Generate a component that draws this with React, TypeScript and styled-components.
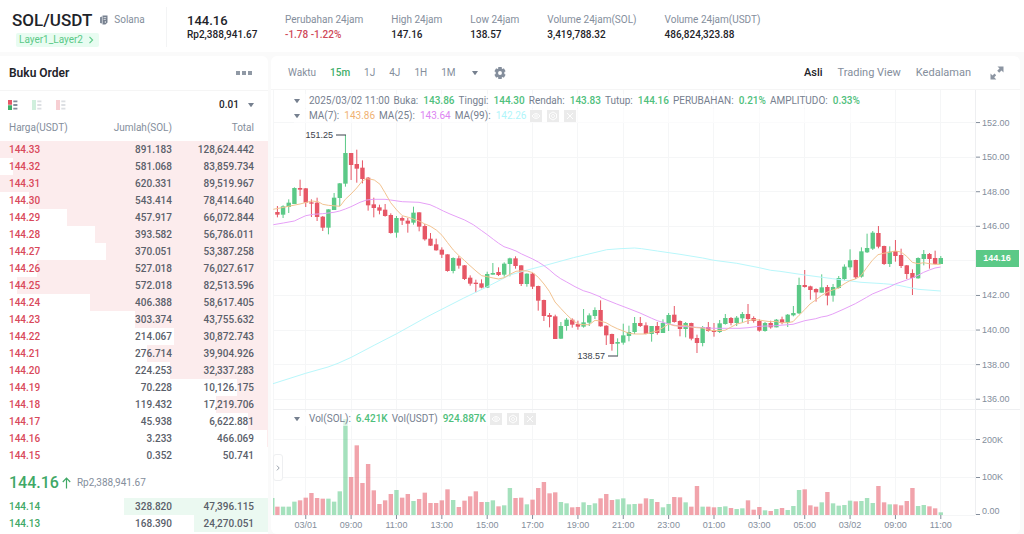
import React from "react";
import styled, { createGlobalStyle } from "styled-components";

const GREEN = "#5bc987";
const RED = "#e65766";

const Global = createGlobalStyle`
  * { box-sizing: border-box; }
  body {
    margin: 0;
    background: #fafafa;
    color: #1e2329;
    font-family: Roboto, "Liberation Sans", sans-serif;
    font-size: 10px;
    line-height: 16px;
  }
  button, select { font: inherit; color: inherit; background: none; border: 0; padding: 0; margin: 0; cursor: pointer; }
  h1, h2, dl, dt, dd, p { margin: 0; font-size: inherit; font-weight: inherit; }
  svg { display: block; }
`;

const Page = styled.div`
  display: flex;
  flex-direction: column;
  gap: 4px;
  height: 100vh;
  overflow: hidden;
`;

/* ---------- header ---------- */

const Header = styled.header`
  display: flex;
  align-items: center;
  flex-shrink: 0;
  height: 52px;
  padding-top: 2px;
  background: #fff;
`;

const PairBlock = styled.div`
  display: flex;
  flex-direction: column;
  gap: 1px;
  width: 167px;
  height: 40px;
  padding-left: 12px;
  border-right: 1px solid #f3f4f5;
`;

const PairLine = styled.div`
  display: flex;
  align-items: center;
  gap: 8px;
  height: 26px;
  color: #848e9c;
`;

const PairName = styled.h1`
  color: #1e2329;
  font-size: 17px;
  font-weight: 500;
`;

const ProjectLink = styled.a`
  display: flex;
  align-items: center;
  gap: 6px;
  color: #848e9c;
  text-decoration: none;
`;

const LayerTag = styled.a`
  display: flex;
  align-items: center;
  align-self: flex-start;
  gap: 4px;
  height: 14px;
  margin-left: 4px;
  padding: 0 4px 0 3px;
  border-radius: 2px;
  background: #e8fcf1;
  color: ${GREEN};
  text-decoration: none;
`;

const LastPrice = styled.div`
  width: 98px;
  margin-left: 20px;
  padding-top: 2px;
  line-height: 14px;
  font-weight: 500;
  strong { display: block; font-size: 13px; font-weight: 500; }
`;

const Stats = styled.dl`
  display: flex;
  gap: 28px;
`;

const Stat = styled.div<{ $down?: boolean }>`
  line-height: 15px;
  dt { color: #848e9c; }
  dd { font-weight: 500; color: ${(p) => (p.$down ? "#cf4a59" : "#1e2329")}; }
`;

/* ---------- columns ---------- */

const Columns = styled.main`
  display: flex;
  flex: 1;
  gap: 3px;
  min-height: 0;
  padding-right: 4px;
`;

const BookCard = styled.section`
  flex: 0 0 268px;
  overflow: hidden;
  border-radius: 0 6px 0 0;
  background: #fff;
`;

const BookTitle = styled.div`
  display: flex;
  align-items: center;
  justify-content: space-between;
  height: 35px;
  padding: 0 16px 0 9px;
  border-bottom: 1px solid #f5f5f5;
  h2 { font-size: 12px; font-weight: 600; }
`;

const BookTools = styled.div`
  display: flex;
  align-items: center;
  height: 28px;
  padding: 0 14px 0 8px;
`;

const ModeButton = styled.button<{ $dim?: boolean }>`
  margin-right: 14px;
  opacity: ${(p) => (p.$dim ? 0.28 : 1)};
`;

const StepLabel = styled.label`
  display: flex;
  align-items: center;
  gap: 9px;
  margin-left: auto;
  font-weight: 500;
  select { appearance: none; outline: none; }
`;

const BookTable = styled.table`
  width: 100%;
  border-collapse: collapse;
  table-layout: fixed;
  th, td { padding: 0; text-align: right; }
  th { height: 22px; padding-bottom: 5px; font-weight: 400; color: #848e9c; }
  th:first-child, td:first-child { width: 80px; padding-left: 9px; text-align: left; }
  th:nth-child(2), td:nth-child(2) { width: 92px; }
  th:last-child, td:last-child { padding-right: 14px; }
`;

const LevelRow = styled.tr<{ $side: "ask" | "bid" }>`
  height: 17px;
  font-weight: 500;
  color: #5a606a;
  background: linear-gradient(to left, ${(p) => (p.$side === "ask" ? "#fceced" : "#ebf9f1")} var(--depth), transparent var(--depth));
  td:first-child { color: ${(p) => (p.$side === "ask" ? "#d9485a" : "#3fa866")}; }
`;

const MidPrice = styled.div`
  display: flex;
  align-items: center;
  height: 34px;
  padding: 3px 9px 0 9px;
  color: #848e9c;
  strong { color: #3fa866; font-size: 16px; font-weight: 500; }
  svg { margin: 0 6px 0 3px; }
`;

/* ---------- chart ---------- */

const ChartCard = styled.section`
  flex: 1;
  min-width: 0;
  overflow: hidden;
  border-radius: 6px;
  background: #fff;
`;

const Toolbar = styled.div`
  display: flex;
  align-items: center;
  justify-content: space-between;
  height: 34px;
  padding: 0 16px 0 17px;
  border-bottom: 1px solid #f5f5f5;
`;

const ToolGroup = styled.div<{ $gap: number; $size: number }>`
  display: flex;
  align-items: center;
  gap: ${(p) => p.$gap}px;
  font-size: ${(p) => p.$size}px;
`;

const Tool = styled.button<{ $tone?: "green" | "dark" }>`
  font-weight: ${(p) => (p.$tone ? 500 : 400)};
  color: ${(p) => (p.$tone === "green" ? "#3fae69" : p.$tone === "dark" ? "#1e2329" : "#848e9c")};
`;

const IconTool = styled(Tool)`
  padding: 0 2px;
`;

const FullscreenTool = styled(Tool)`
  margin-left: 4px;
`;

const Plot = styled.div`
  position: relative;
  > svg { width: 100%; height: auto; }
`;

const Legend = styled.div<{ $top: string }>`
  position: absolute;
  top: ${(p) => p.$top};
  left: 23px;
  display: flex;
  flex-direction: column;
  gap: 1px;
  white-space: nowrap;
`;

const LegendLine = styled.div`
  display: flex;
  align-items: center;
  gap: 4px;
  height: 14px;
  color: #76808f;
  background: rgba(255, 255, 255, 0.6);
  > button:first-child { margin-right: 5px; }
`;

const Value = styled.span<{ $color?: string }>`
  margin-left: 1px;
  color: ${(p) => p.$color || "#4fc07c"};
  font-weight: ${(p) => (p.$color ? 400 : 500)};
`;

const MiniButton = styled.button`
  display: grid;
  place-items: center;
  width: 12px;
  height: 12px;
  margin-right: 1px;
  background: #ebebeb;
`;

const Handle = styled.button`
  position: absolute;
  left: 2px;
  top: 82%;
  display: grid;
  place-items: center;
  width: 10px;
  height: 27px;
  border: 1px solid #eeeff1;
  border-radius: 3px;
  background: #fff;
`;

/* ---------- icons ---------- */

const Caret = () => (
  <svg width="6" height="4" viewBox="0 0 6 4" aria-hidden="true">
    <path d="M0 0h6L3.6 3.6a.8.8 0 0 1-1.2 0z" fill="#76808f" />
  </svg>
);

const DocIcon = () => (
  <svg width="8" height="10" viewBox="0 0 8 10" aria-hidden="true">
    <path d="M0 2.2 2 1.4v7.2L0 8z" fill="#848e9c" />
    <path d="M2.5.6h5v7L5.4 9.4H2.5z" fill="#76808f" />
    <path d="M3.6 2.6h2.6M3.6 4.4h2.2M5.3 6v2" stroke="#fff" strokeWidth=".7" />
  </svg>
);

const ChevronRight = ({ color, size = 8 }: { color: string; size?: number }) => (
  <svg width={size} height={size} viewBox="0 0 8 8" aria-hidden="true">
    <path d="M2.5.8 5.6 4 2.5 7.2" fill="none" stroke={color} strokeWidth="1.1" />
  </svg>
);

const DotsIcon = () => (
  <svg width="16" height="4" viewBox="0 0 16 4" aria-hidden="true">
    <path d="M0 0h4v4H0zM6 0h4v4H6zM12 0h4v4h-4z" fill="#9099a5" />
  </svg>
);

const ModeIcon = ({ top, bottom }: { top: string; bottom: string }) => (
  <svg width="10" height="10" viewBox="0 0 10 10" aria-hidden="true">
    <path d="M0 0h4v4.7H0z" fill={top} />
    <path d="M0 5.3h4V10H0z" fill={bottom} />
    {top === bottom && <path d="M0 4h4v2H0z" fill={top} />}
    <path d="M5.3.4H9.400v1.800H5.3zM5.3 4.100H9.400v1.800H5.3zM5.3 7.800H9.400v1.800H5.3z" fill="#848e9c" />
  </svg>
);

const GearIcon = () => (
  <svg width="12" height="12" viewBox="0 0 13 13" aria-hidden="true">
    <path
      fill="#848e9c"
      fillRule="evenodd"
      d="M4.6 0h3.8v1.7l.9.5 1.4-.8 1.9 3.2-1.4.9v2l1.4.9-1.9 3.2-1.4-.8-.9.5V13H4.6v-1.7l-.9-.5-1.4.8L.4 8.400l1.400-.9v-2L.4 4.600l1.900-3.200 1.400.8.9-.5zM6.500 4.400a2.100 2.100 0 1 0 0 4.200 2.100 2.100 0 0 0 0-4.200z"
    />
  </svg>
);

const ExpandIcon = () => (
  <svg width="14" height="14" viewBox="0 0 14 14" aria-hidden="true">
    <path
      d="M7.500.5h6V6.500l-2-2L9.200 6.800 7.200 4.800 9.500 2.500zM.5 7.500l2 2L4.500 7.500l1.700 1.700-2 2.100 2.100 2.200H.5z"
      fill="#8c95a2"
    />
  </svg>
);

const UpArrow = () => (
  <svg width="9" height="12" viewBox="0 0 9 12" aria-hidden="true">
    <path d="M4.500 11.500V1.200M.8 5 4.500 1.200 8.200 5" fill="none" stroke="#3fa866" strokeWidth="1.200" />
  </svg>
);

const miniPaths = {
  Lihat: "M1 5q4-5 8 0q-4 5-8 0zM5 3.800a1.200 1.200 0 1 0 .01 0z",
  Atur: "M5 1l3.500 2v4L5 9 1.500 7V3zM5 3.500a1.500 1.500 0 1 0 .01 0z",
  Tutup: "M2 2l6 6M8 2l-6 6",
};

const MiniButtons = () => (
  <>
    {Object.entries(miniPaths).map(([label, d]) => (
      <MiniButton key={label} type="button" aria-label={label}>
        <svg width="10" height="10" viewBox="0 0 10 10" aria-hidden="true">
          <path d={d} fill="none" stroke="#fff" strokeWidth=".9" />
        </svg>
      </MiniButton>
    ))}
  </>
);

/* ---------- data ---------- */

const ASKS = [
  ["144.33", "891.183", "128,624.442"],
  ["144.32", "581.068", "83,859.734"],
  ["144.31", "620.331", "89,519.967"],
  ["144.30", "543.414", "78,414.640"],
  ["144.29", "457.917", "66,072.844"],
  ["144.28", "393.582", "56,786.011"],
  ["144.27", "370.051", "53,387.258"],
  ["144.26", "527.018", "76,027.617"],
  ["144.25", "572.018", "82,513.596"],
  ["144.24", "406.388", "58,617.405"],
  ["144.23", "303.374", "43,755.632"],
  ["144.22", "214.067", "30,872.743"],
  ["144.21", "276.714", "39,904.926"],
  ["144.20", "224.253", "32,337.283"],
  ["144.19", "70.228", "10,126.175"],
  ["144.18", "119.432", "17,219.706"],
  ["144.17", "45.938", "6,622.881"],
  ["144.16", "3.233", "466.069"],
  ["144.15", "0.352", "50.741"],
];

const BIDS = [
  ["144.14", "328.820", "47,396.115"],
  ["144.13", "168.390", "24,270.051"],
];

/* total that fills a row's depth bar */
const FULL_DEPTH = 88100;

/* one entry per 15m candle: direction, body top, body bottom, high, low, volume.
   Units are ticks of a third of a pixel. */
const CANDLES = `
r 276 284 258 292 25|g 259 284 256 294 25|g 248 261 238 279 25|g 204 252 202 252 40|r 204 209 179 228 44
r 205 248 204 261 52|r 247 251 238 291 66|r 248 291 233 303 51|r 290 323 288 333 49|g 268 323 268 343 49
g 233 270 219 270 40|g 190 234 189 258 71|g 99 191 45 200 288|r 99 135 99 180 114|r 132 146 89 188 209
r 143 177 121 190 96|r 173 256 171 272 153|r 253 264 233 292 74|r 262 272 254 283 33|r 269 288 252 290 44
r 285 339 280 341 63|g 294 338 288 353 75|r 294 302 289 315 52|r 302 311 294 338 63|g 278 308 260 314 42
r 277 320 277 334 48|r 318 358 312 362 67|r 356 377 339 378 36|r 373 391 356 392 36|r 389 404 382 414 44
r 403 453 403 455 77|g 414 453 412 460 45|r 415 437 408 446 24|r 436 477 435 480 43|r 473 491 466 497 56
r 488 492 479 517 71|r 490 503 478 505 39|g 462 503 455 503 39|g 459 464 429 464 44|r 456 465 442 468 26
g 431 464 427 470 29|g 415 432 413 469 81|r 415 438 409 446 51|r 436 492 436 498 52|g 461 492 460 500 32
r 461 500 458 507 46|r 498 542 497 572 81|r 540 588 539 603 99|r 585 591 579 622 65|r 589 657 584 657 68
g 618 656 606 657 39|g 599 618 594 632 35|r 599 614 595 623 23|r 612 620 602 629 24|g 607 620 567 623 38
g 586 608 580 618 30|g 570 588 562 597 35|r 570 619 541 620 50|r 617 646 616 675 63|r 642 672 641 692 45
g 666 671 655 707 47|g 646 668 611 674 50|g 636 648 617 664 32|g 609 636 591 642 33|r 609 618 591 621 34
r 616 642 607 643 50|g 618 642 618 665 48|r 618 639 606 644 39|g 609 639 598 639 23|g 585 611 579 633 33
r 584 606 558 608 54|r 603 627 601 649 53|g 609 627 606 652 38|r 609 656 608 661 25|r 654 669 644 699 87
g 621 669 618 679 25|r 621 633 606 635 25|r 631 636 609 650 23|g 610 636 600 639 24|g 594 612 582 614 26
r 594 609 591 616 21|g 593 609 588 618 18|g 582 595 576 608 20|r 582 597 552 612 44|r 594 603 589 608 16
r 603 632 598 635 24|g 609 633 606 635 14|r 609 622 602 626 12|g 599 622 597 622 18|r 598 609 590 613 21
g 584 608 582 621 15|g 579 586 558 589 27|g 495 580 473 582 75|r 495 501 450 503 77|r 499 510 497 539 29
r 507 517 505 545 25|g 502 518 463 518 38|r 501 527 495 556 69|g 501 527 492 545 35|g 474 504 468 506 28
g 440 477 433 481 30|g 421 442 388 450 43|r 420 472 419 477 41|g 394 470 382 473 42|g 384 397 341 399 51
g 338 386 333 390 36|r 339 380 318 385 87|r 378 432 377 435 38|g 395 432 379 441 32|r 393 408 360 425 32
r 405 438 386 444 29|r 436 462 435 477 42|r 459 474 448 525 81|g 414 475 412 476 27|g 402 417 390 436 30
r 402 417 399 446 26|r 414 432 392 433 20|g 414 432 408 432 8`
  .trim()
  .split(/[|\n]/)
  .map((entry) => {
    const [side, ...n] = entry.split(" ");
    const [top, bottom, high, low, volume] = n.map(Number);
    return { color: side === "g" ? GREEN : RED, top, bottom, high, low, volume };
  });

/* averages are kept in sections, each with its own origin in ticks */
type Section = [number, number, string];

const AVERAGES: { color: string; sections: Section[] }[] = [
  {
    color: "#b9f7fb",
    sections: [
      [-6, 510, "15,281 113,250 180,231 210,220 250,202 320,165 386,131 460,90"],
      [480, 300, "0,286 100,235 172,200 240,165 292,150 350,135 430,113 510,94"],
      [990, 300, "20,89 60,86 104,84 125,86 172,93 240,103 308,114 342,121 410,130 478,143 512,151"],
      [1530, 270, "0,184 74,195 158,206 243,217 311,221 346,224 380,231 414,238 482,243"],
    ],
  },
  {
    color: "#e6a0f7",
    sections: [
      [0, 0, "10,314 40,309 73,303 90,295 107,287 130,283 158,281 192,277 209,273 226,267 243,260 270,247 290,240 310,238 345,238 362,240 397,245 447,247 480,254 500,263 520,273 540,282"],
      [480, 300, "104,0 130,14 155,32 172,44 190,58 206,70 222,80 240,86 258,93 275,102 308,117 325,126 342,137 358,149 375,164 392,176 410,186 435,200 460,212 480,218 512,231"],
      [990, 300, "0,232 50,252 87,266 120,279 155,295 172,302 206,312 240,319 290,322 342,325 420,325 444,323 478,319 529,317"],
      [1530, 270, "0,346 39,343 74,332 107,326 124,321 141,318 158,312 192,297 226,281 260,262 277,252 294,245 311,238 328,231 346,222 363,216 397,204 414,196 431,187 448,180 465,174 482,171"],
    ],
  },
  {
    color: "#f2c391",
    sections: [
      [0, 0, "10,268 35,263 60,258 90,252 125,243 145,245 158,253 175,256 210,259 226,238 243,222 260,204 277,183 290,176 303,178 313,180 330,193 345,218 362,248 380,270 397,287 415,292 430,297 447,303 463,311"],
      [480, 300, "0,18 20,31 36,46 52,67 70,90 87,107 104,122 120,137 138,153 155,167 172,170 190,174 206,177 222,173 240,163 258,154 275,152 292,153 308,158 325,172 342,192 358,214 375,246 392,265 410,284 427,300 444,312 460,314 478,314 495,301"],
      [990, 300, "0,303 18,308 35,318 52,326 70,333 87,340 104,342 135,342 155,337 172,333 189,323 206,312 222,317 240,318 256,316 275,321 290,323 308,324 325,330 342,332 375,331 392,322 410,312 427,308 444,302 461,299 478,300 495,303 512,305 529,304"],
      [1530, 270, "0,338 22,338 39,335 57,316 74,299 90,282 107,270 124,257 141,247 158,240 175,234 192,222 209,212 226,207 243,197 260,173 277,151 294,134 311,130 328,127 346,123 363,126 380,139 397,157 414,161 431,158 448,161 465,163 482,163"],
    ],
  },
];

const TIMES = ["03/01", "09:00", "11:00", "13:00", "15:00", "17:00", "19:00", "21:00", "23:00", "01:00", "03:00", "05:00", "03/02", "09:00", "11:00"];
const PRICES = [152, 150, 148, 146, 144, 142, 140, 138, 136];

const candleX = (i: number) => 6.4 + i * 5.67;
const priceY = (price: number) => 136.3 + (146 - price) * 17.29;
const tickY = (t: number) => 30 + t / 3;
const VOLUME_BASE = 425;
const AXIS_X = 704;

const averagePoints = (sections: Section[]) =>
  sections
    .flatMap(([ox, oy, list]) =>
      list.split(" ").map((pair) => {
        const [x, y] = pair.split(",").map(Number);
        return `${((x + ox) / 3 - 1).toFixed(1)},${tickY(y + oy).toFixed(1)}`;
      })
    )
    .join(" ");

const Candles = () => (
  <svg viewBox="0 0 749 444" role="img" aria-label="Grafik SOL/USDT 15m" fontFamily='"Liberation Sans", Arial, sans-serif' fontSize="9" fill="#848e9c">
    <g stroke="#f5f6f7" strokeWidth="1" shapeRendering="crispEdges">
      {PRICES.map((p) => (
        <line key={p} x1="2" x2={AXIS_X} y1={priceY(p)} y2={priceY(p)} />
      ))}
      <line x1="2" x2={AXIS_X} y1="349.700" y2="349.700" />
      <line x1="2" x2={AXIS_X} y1="387.500" y2="387.500" />
      {TIMES.map((_, k) => (
        <line key={k} x1={candleX(5 + 8 * k)} x2={candleX(5 + 8 * k)} y1="0" y2={VOLUME_BASE} />
      ))}
      <line x1="2.500" x2="2.500" y1="0" y2={VOLUME_BASE} />
      <line x1="2" x2={AXIS_X} y1={VOLUME_BASE} y2={VOLUME_BASE} />
      <line x1="2" x2="749" y1="319.500" y2="319.500" stroke="#eeeff1" />
      <line x1={AXIS_X} x2={AXIS_X} y1="0" y2={VOLUME_BASE} stroke="#eeeff1" />
    </g>

    <rect x="2" y="408" width="1.500" height="17" fill={GREEN} opacity=".55" />
    {CANDLES.map((c, i) => (
      <g key={i} fill={c.color}>
        <rect x={candleX(i) - 2.2} y={VOLUME_BASE - c.volume / 3} width="4.400" height={c.volume / 3} opacity=".55" />
        <rect x={candleX(i) - 0.5} y={tickY(c.high)} width="1" height={(c.low - c.high) / 3} />
        <rect x={candleX(i) - 2.2} y={tickY(c.top)} width="4.400" height={(c.bottom - c.top) / 3} />
      </g>
    ))}

    {AVERAGES.map((a) => (
      <polyline key={a.color} points={averagePoints(a.sections)} fill="none" stroke={a.color} strokeWidth="1" strokeLinejoin="round" />
    ))}

    <g fill="#3c424c">
      <text x="62" y="48" textAnchor="end">151.25</text>
      <rect x="65" y="44.500" width="10" height="1" />
      <text x="334" y="269" textAnchor="end">138.57</text>
      <rect x="337" y="265.500" width="10" height="1" />
    </g>

    {PRICES.filter((p) => p !== 144).map((p) => (
      <g key={p}>
        <rect x="705" y={priceY(p) - 0.5} width="4" height="1" />
        <text x="711" y={priceY(p) + 3}>{p.toFixed(2)}</text>
      </g>
    ))}
    {([["200K", 349, 353], ["100K", 387, 390], ["0.00", 424, 424]] as [string, number, number][]).map(([label, tick, base]) => (
      <g key={label}>
        <rect x="705" y={tick} width="4" height="1" />
        <text x="711" y={base}>{label}</text>
      </g>
    ))}
    {TIMES.map((t, k) => (
      <g key={k}>
        <rect x={candleX(5 + 8 * k) - 0.5} y={VOLUME_BASE} width="1" height="4" />
        <text x={candleX(5 + 8 * k)} y="438" textAnchor="middle">{t}</text>
      </g>
    ))}
    <rect x="705" y="160" width="43" height="17" fill={GREEN} />
    <text x="726" y="171" textAnchor="middle" fill="#fff" fontWeight="700">144.16</text>
  </svg>
);

const Levels = ({ rows, side }: { rows: string[][]; side: "ask" | "bid" }) => (
  <tbody>
    {rows.map(([price, amount, total]) => {
      const depth = Math.min(1, Number(total.replace(/,/g, "")) / FULL_DEPTH);
      return (
        <LevelRow key={price} $side={side} style={{ "--depth": `${(depth * 100).toFixed(1)}%` } as React.CSSProperties}>
          <td>{price}</td>
          <td>{amount}</td>
          <td>{total}</td>
        </LevelRow>
      );
    })}
  </tbody>
);

const STATS: [string, string][] = [
  ["Perubahan 24jam", "-1.78 -1.22%"],
  ["High 24jam", "147.16"],
  ["Low 24jam", "138.57"],
  ["Volume 24jam(SOL)", "3,419,788.32"],
  ["Volume 24jam(USDT)", "486,824,323.88"],
];

const INTERVALS = ["Waktu", "15m", "1J", "4J", "1H", "1M"];

const OHLC: [string, string][] = [
  ["Buka:", "143.86"],
  ["Tinggi:", "144.30"],
  ["Rendah:", "143.83"],
  ["Tutup:", "144.16"],
  ["PERUBAHAN:", "0.21%"],
  ["AMPLITUDO:", "0.33%"],
];

export default function App() {
  return (
    <Page>
      <Global />
      <Header>
        <PairBlock>
          <PairLine>
            <PairName>SOL/USDT</PairName>
            <ProjectLink href="#solana">
              <DocIcon />
              Solana
            </ProjectLink>
          </PairLine>
          <LayerTag href="#layers">
            Layer1_Layer2
            <ChevronRight color={GREEN} />
          </LayerTag>
        </PairBlock>
        <LastPrice>
          <strong>144.16</strong>
          Rp2,388,941.67
        </LastPrice>
        <Stats>
          {STATS.map(([label, value], i) => (
            <Stat key={label} $down={i === 0}>
              <dt>{label}</dt>
              <dd>{value}</dd>
            </Stat>
          ))}
        </Stats>
      </Header>

      <Columns>
        <BookCard>
          <BookTitle>
            <h2>Buku Order</h2>
            <button type="button" aria-label="Lainnya"><DotsIcon /></button>
          </BookTitle>
          <BookTools>
            <ModeButton type="button" aria-label="Semua"><ModeIcon top={RED} bottom="#3fae69" /></ModeButton>
            <ModeButton type="button" aria-label="Beli" $dim><ModeIcon top={GREEN} bottom={GREEN} /></ModeButton>
            <ModeButton type="button" aria-label="Jual" $dim><ModeIcon top={RED} bottom={RED} /></ModeButton>
            <StepLabel>
              <select aria-label="Langkah harga" defaultValue="0.01">
                <option>0.01</option>
              </select>
              <Caret />
            </StepLabel>
          </BookTools>
          <BookTable>
            <thead>
              <tr>
                <th>Harga(USDT)</th>
                <th>Jumlah(SOL)</th>
                <th>Total</th>
              </tr>
            </thead>
            <Levels rows={ASKS} side="ask" />
          </BookTable>
          <MidPrice>
            <strong>144.16</strong>
            <UpArrow />
            Rp2,388,941.67
          </MidPrice>
          <BookTable>
            <Levels rows={BIDS} side="bid" />
          </BookTable>
        </BookCard>

        <ChartCard>
          <Toolbar>
            <ToolGroup $gap={14} $size={10}>
              {INTERVALS.map((label) => (
                <Tool key={label} type="button" $tone={label === "15m" ? "green" : undefined}>{label}</Tool>
              ))}
              <IconTool type="button" aria-label="Interval lain"><Caret /></IconTool>
              <Tool type="button" aria-label="Pengaturan"><GearIcon /></Tool>
            </ToolGroup>
            <ToolGroup $gap={15} $size={11}>
              <Tool type="button" $tone="dark">Asli</Tool>
              <Tool type="button">Trading View</Tool>
              <Tool type="button">Kedalaman</Tool>
              <FullscreenTool type="button" aria-label="Layar penuh"><ExpandIcon /></FullscreenTool>
            </ToolGroup>
          </Toolbar>
          <Plot>
            <Candles />
            <Legend $top="4px">
              <LegendLine>
                <button type="button" aria-label="Ciutkan harga"><Caret /></button>
                <span>2025/03/02 11:00</span>
                {OHLC.map(([label, value]) => (
                  <React.Fragment key={label}>
                    <span>{label}</span>
                    <Value>{value}</Value>
                  </React.Fragment>
                ))}
              </LegendLine>
              <LegendLine>
                <button type="button" aria-label="Ciutkan rata-rata"><Caret /></button>
                <span>MA(7):</span>
                <Value $color="#f0b273">143.86</Value>
                <span>MA(25):</span>
                <Value $color="#dd85f2">143.64</Value>
                <span>MA(99):</span>
                <Value $color="#b0f5fa">142.26</Value>
                <MiniButtons />
              </LegendLine>
            </Legend>
            <Legend $top="72.5%">
              <LegendLine>
                <button type="button" aria-label="Ciutkan volume"><Caret /></button>
                <span>Vol(SOL):</span>
                <Value>6.421K</Value>
                <span>Vol(USDT)</span>
                <Value>924.887K</Value>
                <MiniButtons />
              </LegendLine>
            </Legend>
            <Handle type="button" aria-label="Buka panel"><ChevronRight color="#848e9c" size={6} /></Handle>
          </Plot>
        </ChartCard>
      </Columns>
    </Page>
  );
}
